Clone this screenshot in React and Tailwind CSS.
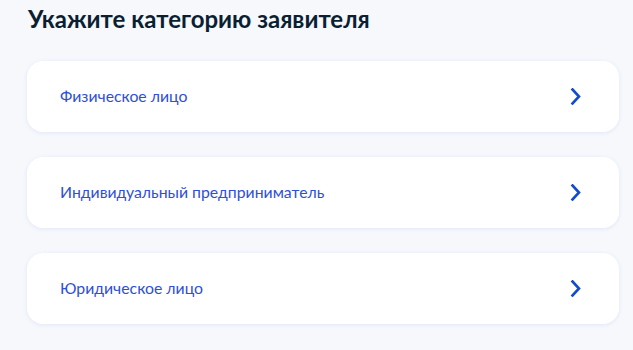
import React from "react";

const options = ["Физическое лицо", "Индивидуальный предприниматель", "Юридическое лицо"];

const Chevron = () => (
    <svg width="12" height="17" viewBox="0 0 12 17" fill="none">
        <path d="M2.5 1.5L9 8.5L2.5 15.5" stroke="#0d4cd3" strokeWidth="2.6" strokeLinecap="square" />
    </svg>
);

export default function App() {
    return (
        <div className="w-[633px] h-[350px] overflow-hidden bg-[#f6f8fc] pl-[27px] pr-[14px]" style={{ fontFamily: "Lato, 'Noto Sans', sans-serif" }}>
            <h1 className="pl-px pt-[4px] text-[24px] leading-[29px] font-bold text-[#0b1f33]">
                Укажите категорию заявителя
            </h1>

            <div className="mt-[28px] flex flex-col gap-[25px]">
                {options.map((label) => (
                    <button
                        key={label}
                        className="h-[71px] w-[592px] flex items-center justify-between rounded-[16px] bg-white pl-[33px] pr-[37px] shadow-[0_1px_4px_rgba(102,138,199,0.15)] text-left"
                    >
                        <span className="text-[15.8px] leading-[20px] -mt-[2px] text-[#2f4fd6]">{label}</span>
                        <Chevron />
                    </button>
                ))}
            </div>
        </div>
    );
}
